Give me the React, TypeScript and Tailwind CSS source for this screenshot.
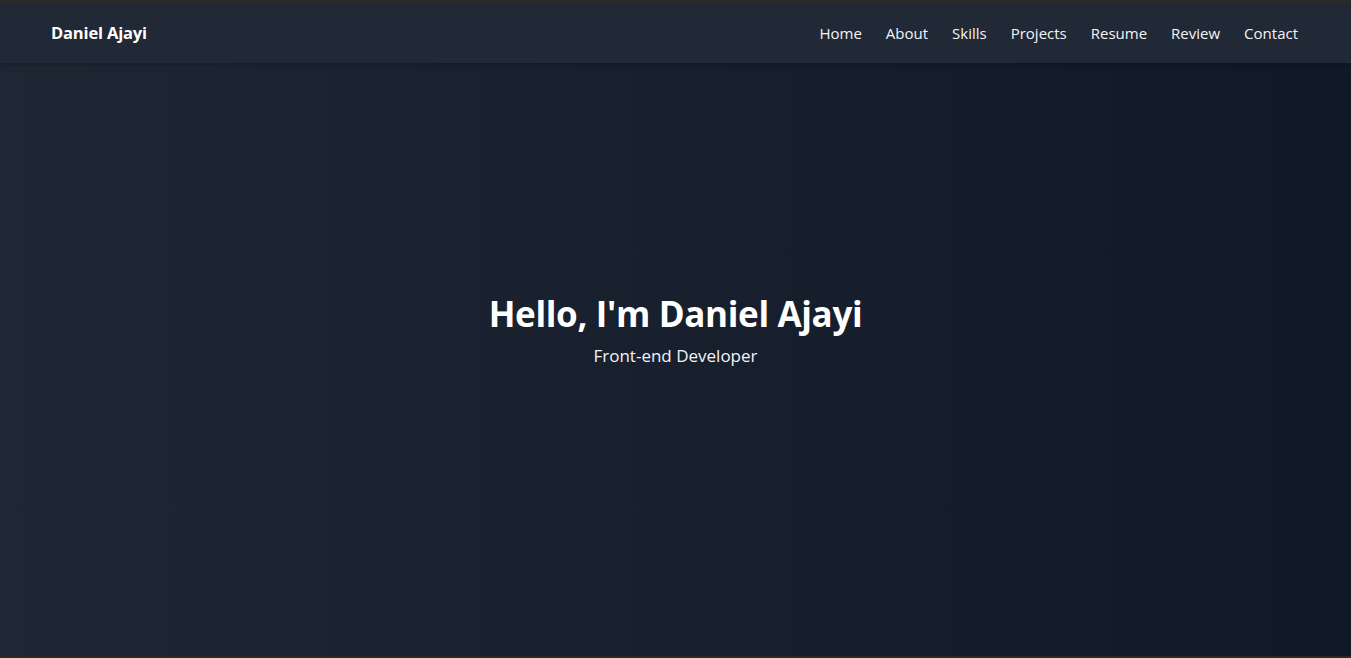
const links = ["Home", "About", "Skills", "Projects", "Resume", "Review", "Contact"];

export default function App() {
  return (
    <div
      className="flex h-[658px] w-full flex-col overflow-hidden border-t-[3px] border-b-2 border-[#2a2a2a] bg-[#1f2937] text-white"
      style={{ fontFamily: '"Open Sans", "Noto Sans", sans-serif' }}
    >
      {/* navbar */}
      <nav className="relative z-10 flex h-[60px] shrink-0 items-center justify-between bg-[#212936] pl-[51px] pr-[53px] pt-px shadow-[0_2px_6px_rgba(0,0,0,0.25)]">
        <span className="text-[16.5px] font-bold tracking-[-0.01em]">Daniel Ajayi</span>
        <ul className="flex items-center gap-6 text-[15px]">
          {links.map((link) => (
            <li key={link}>
              <a href={`#${link.toLowerCase()}`} className="text-gray-100 hover:text-white">
                {link}
              </a>
            </li>
          ))}
        </ul>
      </nav>

      {/* hero */}
      <section className="flex flex-1 flex-col items-center bg-gradient-to-r from-[#1f2735] to-[#111827] pt-[231px]">
        <h1 className="text-[35px] font-bold leading-10 tracking-[-0.01em]">Hello, I'm Daniel Ajayi</h1>
        <p className="mt-2 text-[17px] leading-7 text-gray-100">Front-end Developer</p>
      </section>
    </div>
  );
}
